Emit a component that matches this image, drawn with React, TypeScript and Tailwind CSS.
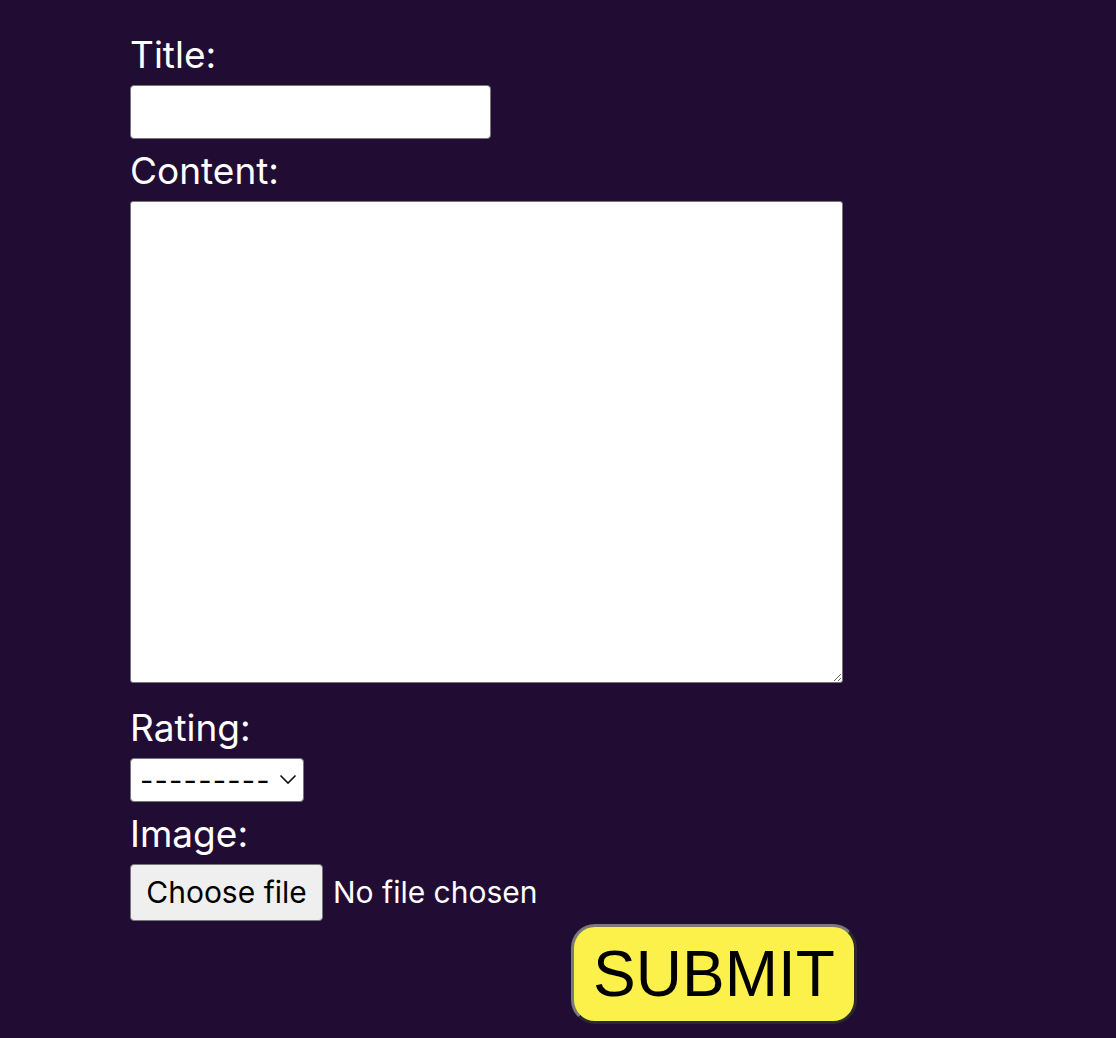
import { useState } from "react";

export default function App() {
  const [rating, setRating] = useState("");
  const [fileName, setFileName] = useState<string | null>(null);

  return (
    <div className="min-h-[1038px] bg-[#210c34] pl-[130px] pt-[23px] font-['Inter','Noto_Sans',sans-serif] text-white">
      <form onSubmit={(e) => e.preventDefault()}>
        {/* Title */}
        <label htmlFor="title" className="block h-[62px] text-[37px] leading-[62px] pt-[1px]">
          Title:
        </label>
        <input
          id="title"
          type="text"
          className="block h-[54px] w-[361px] rounded-[4px] border border-[#767676] bg-white px-2 text-[26px] text-black outline-none"
        />

        {/* Content */}
        <label htmlFor="content" className="block h-[62px] text-[37px] leading-[62px] pt-[1px]">
          Content:
        </label>
        <textarea
          id="content"
          className="mb-[13px] block h-[482px] w-[713px] rounded-[3px] border border-[#767676] bg-white p-1 text-[22px] text-black outline-none"
        />

        {/* Rating */}
        <label htmlFor="rating" className="block h-[62px] text-[37px] leading-[62px] pt-[1px]">
          Rating:
        </label>
        <div className="relative h-[44px] w-[174px]">
          <select
            id="rating"
            value={rating}
            onChange={(e) => setRating(e.target.value)}
            className="block h-[44px] w-[174px] appearance-none rounded-[4px] border border-[#767676] bg-white pl-[9px] text-[29px] tracking-[1.2px] text-black outline-none"
          >
            <option value="">---------</option>
            <option value="1">1</option>
            <option value="2">2</option>
            <option value="3">3</option>
            <option value="4">4</option>
            <option value="5">5</option>
          </select>
          <svg
            className="pointer-events-none absolute right-[7px] top-[16px]"
            width="18"
            height="11"
            viewBox="0 0 18 11"
            fill="none"
          >
            <path d="M1.5 1.5 L9 9 L16.5 1.5" stroke="#111" strokeWidth="1.6" />
          </svg>
        </div>

        {/* Image */}
        <label className="block h-[62px] text-[37px] leading-[62px] pt-[1px]">Image:</label>
        <div className="flex items-center gap-[10px]">
          <label className="flex h-[57px] w-[193px] cursor-pointer items-center justify-center rounded-[4px] border border-[#767676] bg-[#efefef] text-[30px] text-black">
            Choose file
            <input
              type="file"
              className="hidden"
              onChange={(e) => setFileName(e.target.files?.[0]?.name ?? null)}
            />
          </label>
          <span className="text-[30px]">{fileName ?? "No file chosen"}</span>
        </div>

        {/* Submit */}
        <button
          type="submit"
          className="ml-[441px] mt-[3px] flex h-[100px] w-[286px] items-center justify-center rounded-[24px] border-[3px] border-t-[#7a7a7a] border-l-[#7a7a7a] border-r-[#2a2a2a] border-b-[#2a2a2a] bg-[#fcf04b] font-['Liberation_Sans','Arial',sans-serif] text-[64px] text-black"
        >
          SUBMIT
        </button>
      </form>
    </div>
  );
}
